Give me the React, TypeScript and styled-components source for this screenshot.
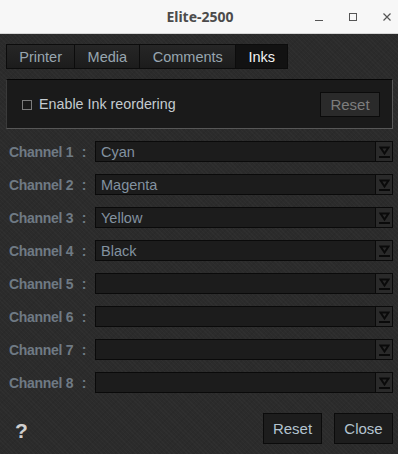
import styled, { createGlobalStyle } from "styled-components";

const GlobalStyle = createGlobalStyle`
  html, body {
    margin: 0;
    padding: 0;
    background: #2c2c2c;
  }
  * {
    box-sizing: border-box;
  }
`;

const Window = styled.div`
  width: 398px;
  height: 454px;
  display: flex;
  flex-direction: column;
  font-family: "Liberation Sans", Arial, sans-serif;
  overflow: hidden;
`;

const TitleBar = styled.div`
  height: 34px;
  flex: none;
  background: #f7f7f7;
  border-bottom: 1px solid #d6d6d6;
  display: grid;
  grid-template-columns: 1fr auto 1fr;
  align-items: center;
`;

const Title = styled.div`
  grid-column: 2;
  font-family: "Noto Sans", "Open Sans", sans-serif;
  font-weight: 700;
  font-size: 14px;
  color: #4b4b4b;
  padding-left: 2px;
`;

const WinControls = styled.div`
  grid-column: 3;
  justify-self: end;
  display: flex;
  align-items: center;
  gap: 18px;
  padding-right: 3px;
`;

const WinButton = styled.span`
  width: 16px;
  height: 16px;
  display: flex;
  align-items: center;
  justify-content: center;
`;

const Body = styled.div`
  flex: 1;
  display: flex;
  flex-direction: column;
  padding: 10px 5px 9px 6px;
  background-color: #2b2b2b;
  background-image: repeating-linear-gradient(
      45deg,
      rgba(255, 255, 255, 0.018) 0px,
      rgba(255, 255, 255, 0.018) 1px,
      transparent 1px,
      transparent 3px
    ),
    repeating-linear-gradient(
      -45deg,
      rgba(0, 0, 0, 0.05) 0px,
      rgba(0, 0, 0, 0.05) 1px,
      transparent 1px,
      transparent 4px
    );
`;

const Tabs = styled.div`
  display: flex;
  height: 25px;
`;

const Tab = styled.div<{ $active?: boolean }>`
  height: 25px;
  padding: 0 12.3px;
  display: flex;
  align-items: center;
  font-size: 14.5px;
  border: 1px solid #0c0c0c;
  margin-right: -1px;
  color: ${(p) => (p.$active ? "#f2f2f2" : "#98a6b0")};
  background: ${(p) =>
    p.$active ? "#121212" : "linear-gradient(#262626, #1c1c1c)"};
`;

const Panel = styled.div`
  margin-top: 10px;
  height: 50px;
  display: flex;
  align-items: center;
  justify-content: space-between;
  padding: 0 12px 0 15px;
  background: #1a1a1a;
  border: 1px solid #575757;
  border-top-color: #050505;
  border-left-color: #3a3a3a;
`;

const CheckLabel = styled.label`
  display: flex;
  align-items: center;
  gap: 7px;
  font-size: 14.3px;
  color: #c4cbd0;
`;

const CheckBox = styled.span`
  width: 10px;
  height: 10px;
  border: 1px solid #7c7c7c;
  margin-top: 1px;
`;

const Button = styled.button<{ $disabled?: boolean; $h?: number }>`
  height: ${(p) => p.$h ?? 25}px;
  width: ${(p) => (p.$h ? 59 : 60)}px;
  padding: 0;
  font-family: "Liberation Sans", Arial, sans-serif;
  font-size: 15px;
  color: ${(p) => (p.$disabled ? "#7d7d7d" : "#b3c3cf")};
  background: ${(p) => (p.$disabled ? "#2a2a2a" : "#1d1d1d")};
  border: 1px solid #0b0b0b;
  border-radius: 0;
`;

const Channels = styled.div`
  margin-top: 12px;
  display: flex;
  flex-direction: column;
  gap: 12px;
`;

const Row = styled.div`
  display: flex;
  align-items: center;
  height: 21px;
`;

const Label = styled.div`
  width: 89px;
  flex: none;
  display: flex;
  justify-content: space-between;
  padding: 0 9px 0 3px;
  font-size: 14px;
  font-weight: 700;
  letter-spacing: -0.3px;
  color: #6f7a84;
`;

const Select = styled.div`
  flex: 1;
  height: 21px;
  display: flex;
  background: #1c1c1c;
  border: 1px solid #0a0a0a;
`;

const SelectValue = styled.div`
  flex: 1;
  display: flex;
  align-items: center;
  padding-left: 5px;
  font-size: 14.5px;
  color: #8392a0;
`;

const SelectArrow = styled.div`
  width: 17px;
  flex: none;
  display: flex;
  align-items: center;
  justify-content: center;
  background: #2a2a2a;
  border-left: 1px solid #0a0a0a;
`;

const Footer = styled.div`
  margin-top: auto;
  display: flex;
  align-items: center;
  gap: 12px;
  padding-bottom: 1px;
`;

const Help = styled.div`
  margin-left: 9px;
  margin-right: auto;
  font-size: 21px;
  font-weight: 700;
  color: #cfcfcf;
  margin-top: 4px;
`;

const ArrowIcon = () => (
  <svg width="11" height="14" viewBox="0 0 11 14">
    <path
      d="M1.5 2.5 H9.5 L5.5 8.5 Z"
      fill="none"
      stroke="#0a0a0a"
      strokeWidth="2"
      strokeLinejoin="miter"
    />
    <rect x="0" y="11" width="11" height="2" fill="#0a0a0a" />
  </svg>
);

const channels = ["Cyan", "Magenta", "Yellow", "Black", "", "", "", ""];

export default function App() {
  return (
    <Window>
      <GlobalStyle />
      <TitleBar>
        <Title>Elite-2500</Title>
        <WinControls>
          <WinButton>
            <svg width="10" height="10" viewBox="0 0 10 10">
              <rect x="1" y="8" width="8" height="1" fill="#555" />
            </svg>
          </WinButton>
          <WinButton>
            <svg width="10" height="10" viewBox="0 0 10 10">
              <rect x="1.5" y="1.5" width="7" height="7" fill="none" stroke="#555" />
            </svg>
          </WinButton>
          <WinButton>
            <svg width="10" height="10" viewBox="0 0 10 10">
              <path d="M1.5 1.5 L8.5 8.5 M8.5 1.5 L1.5 8.5" stroke="#555" strokeWidth="1.2" />
            </svg>
          </WinButton>
        </WinControls>
      </TitleBar>
      <Body>
        <Tabs>
          <Tab>Printer</Tab>
          <Tab>Media</Tab>
          <Tab>Comments</Tab>
          <Tab $active>Inks</Tab>
        </Tabs>
        <Panel>
          <CheckLabel>
            <CheckBox />
            Enable Ink reordering
          </CheckLabel>
          <Button $disabled>Reset</Button>
        </Panel>
        <Channels>
          {channels.map((c, i) => (
            <Row key={i}>
              <Label>
                <span>Channel {i + 1}</span>
                <span>:</span>
              </Label>
              <Select>
                <SelectValue>{c}</SelectValue>
                <SelectArrow>
                  <ArrowIcon />
                </SelectArrow>
              </Select>
            </Row>
          ))}
        </Channels>
        <Footer>
          <Help>?</Help>
          <Button $h={31}>Reset</Button>
          <Button $h={31}>Close</Button>
        </Footer>
      </Body>
    </Window>
  );
}
